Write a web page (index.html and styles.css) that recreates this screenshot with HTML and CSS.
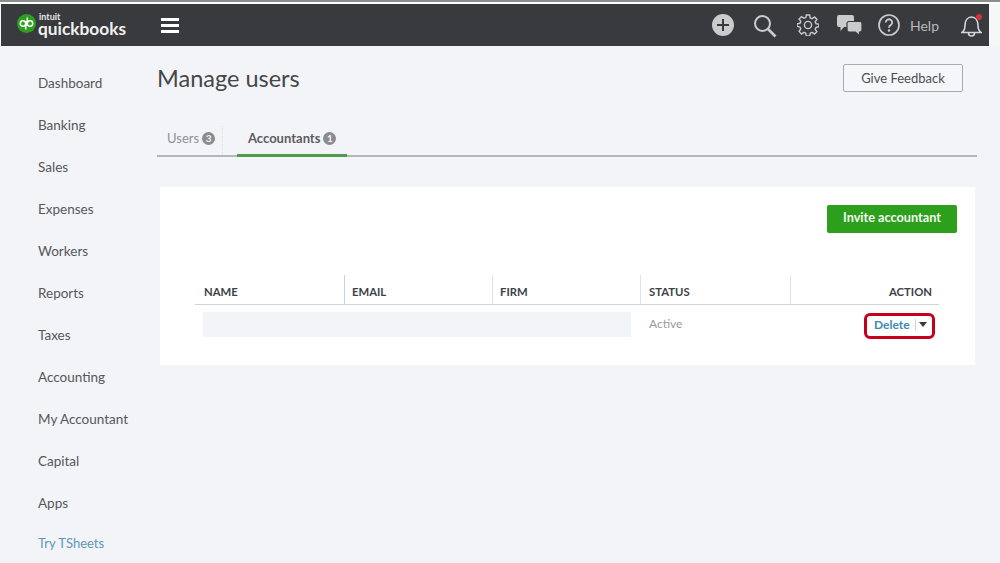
FILE: index.html
```html
<!DOCTYPE html>
<html lang="en">
<head>
<meta charset="utf-8">
<title>Manage users</title>
<link rel="stylesheet" href="styles.css">
</head>
<body>
<div class="topstrip"></div>
<header class="topbar">
  <div class="brand">
    <svg class="qb-logo" width="19" height="19" viewBox="0 0 19 19"><circle cx="9.5" cy="9.500" r="9.500" fill="#2ca01c"/><g fill="none" stroke="#fff" stroke-width="1.500"><circle cx="6" cy="9.500" r="2.700"/><circle cx="13" cy="9.500" r="2.700"/><path d="M8.700 7V15.500M10.300 12V3.500"/></g></svg>
    <div class="wordmark"><span class="intuit">intuit</span><span class="qb-name">quickbooks</span></div>
  </div>
  <div class="burger"><span></span><span></span><span></span></div>
  <div class="top-actions">
    <svg class="i-plus" width="22" height="22" viewBox="0 0 22 22"><circle cx="11" cy="11" r="11" fill="#c9cbcd"/><path d="M5 11H17M11 5V17" stroke="#393a3d" stroke-width="2"/></svg>
    <svg class="i-search" width="24" height="24" viewBox="0 0 24 24"><circle cx="9.500" cy="9.500" r="7.500" fill="none" stroke="#c9cbcd" stroke-width="2"/><path d="M15 15L22.500 22.500" stroke="#c9cbcd" stroke-width="2.600"/></svg>
    <svg class="i-gear" width="22" height="22" viewBox="0 0 22 22" fill="none" stroke="#c9cbcd" stroke-width="1.400"><circle cx="11" cy="11" r="3.600"/><path d="M9.300 1h3.400l.5 2.900 1.900.8 2.400-1.700 2.400 2.400-1.700 2.400.8 1.900 2.900.5v2.600l-2.900.6-.8 1.900 1.700 2.400-2.400 2.400-2.400-1.700-1.900.8-.5 2.800H9.300l-.5-2.800-1.900-.8-2.400 1.700L2.100 17.300l1.700-2.400-.8-1.900-2.900-.6V9.800l2.900-.5.8-1.900L2.100 5l2.400-2.400 2.400 1.700 1.900-.8z"/></svg>
    <svg class="i-chat" width="25" height="21" viewBox="0 0 25 21"><path d="M2 0H15a2 2 0 0 1 2 2V10a2 2 0 0 1-2 2H7L3.500 16V12H2a2 2 0 0 1-2-2V2a2 2 0 0 1 2-2Z" fill="#c9cbcd"/><path d="M12 6.500H23a2 2 0 0 1 2 2V15a2 2 0 0 1-2 2H22.500V21L18.500 17H12a2 2 0 0 1-2-2V8.500a2 2 0 0 1 2-2Z" fill="#c9cbcd" stroke="#393a3d" stroke-width="1.200"/></svg>
    <svg class="i-help" width="22" height="22" viewBox="0 0 22 22"><circle cx="11" cy="11" r="10" fill="none" stroke="#c9cbcd" stroke-width="1.700"/><path d="M7.800 8.500a3.200 3.200 0 1 1 5 2.600c-1.200.8-1.800 1.300-1.800 2.700" fill="none" stroke="#c9cbcd" stroke-width="1.800"/><circle cx="11" cy="16.500" r="1.200" fill="#c9cbcd"/></svg>
    <span class="help-label">Help</span>
    <span class="bell-wrap">
      <svg width="21" height="23" viewBox="0 0 21 23" fill="none" stroke="#d5d6d8" stroke-width="1.600"><path d="M1 18.500C3 17 4 15.500 4 11.500C4 6.500 6.500 3 10.500 3S17 6.500 17 11.500C17 15.500 18 17 20 18.500Z"/><path d="M7.500 19a3 3 0 0 0 6 0"/></svg>
      <span class="bell-dot"></span>
    </span>
  </div>
</header>
<div class="shell">
  <nav class="sidebar">
    <a>Dashboard</a><a>Banking</a><a>Sales</a><a>Expenses</a><a>Workers</a><a>Reports</a><a>Taxes</a><a>Accounting</a><a>My Accountant</a><a>Capital</a><a>Apps</a><a class="promo">Try TSheets</a>
  </nav>
  <main class="content">
    <div class="page-head">
      <h1>Manage users</h1>
      <button class="feedback">Give Feedback</button>
    </div>
    <div class="tabs">
      <div class="tab tab-users">Users<span class="count">3</span></div>
      <div class="tab tab-active">Accountants<span class="count">1</span></div>
    </div>
    <section class="card">
      <div class="card-actions"><button class="invite">Invite accountant</button></div>
      <div class="table">
        <div class="row head">
          <div class="cell c-name">NAME</div>
          <div class="cell c-email">EMAIL</div>
          <div class="cell c-firm">FIRM</div>
          <div class="cell c-status">STATUS</div>
          <div class="cell c-action">ACTION</div>
        </div>
        <div class="row body">
          <div class="redacted"></div>
          <div class="status">Active</div>
          <div class="action-box"><span class="delete">Delete</span><span class="sep"></span><span class="caret"></span></div>
        </div>
      </div>
    </section>
  </main>
</div>
</body>
</html>
```

FILE: styles.css
```css
* { box-sizing: border-box; }
html, body { margin: 0; height: 563px; overflow: hidden; }
body {
  position: relative;
  background: #f3f4f8;
  font-family: Lato, "Noto Sans", sans-serif;
  color: #55575b;
}
body::after {
  content: "";
  position: absolute;
  top: 0;
  right: 0;
  width: 3px;
  height: 100%;
  background: linear-gradient(to bottom, transparent 0 24px, #e4e5e8 24px 25px, transparent 25px);
  background-size: 100% 23.500px;
}
.topstrip {
  height: 4px;
  background: #fff;
  border-top: 2px solid #8d8d8d;
}
.topbar {
  height: 42px;
  background: #393a3d;
  border-left: 1px solid #f6f7f9;
  border-right: 11px solid #f6f7f9;
  display: flex;
  align-items: center;
  color: #c9cbcd;
}
.brand {
  display: flex;
  align-items: center;
  gap: 2px;
  margin-left: 16px;
  width: 128px;
  margin-top: -3px;
}
.wordmark { display: flex; flex-direction: column; color: #fff; margin-top: 3px; }
.intuit { font-size: 9px; font-weight: 700; height: 7px; line-height: 7px; margin-left: 1px; color: #e8e8e8; }
.qb-name { font-size: 17.300px; font-weight: 700; height: 17px; line-height: 17px; color: #f1f1f1; }
.burger { display: flex; flex-direction: column; gap: 3px; width: 18px; margin-left: 16px; }
.burger span { height: 3px; background: #fff; }
.top-actions { margin-left: auto; display: flex; align-items: center; padding-right: 7px; }
.i-search { margin-left: 19px; margin-top: 1px; }
.i-gear { margin-left: 20px; }
.i-chat { margin-left: 18px; }
.i-help { margin-left: 16px; }
.help-label { margin-left: 10px; font-size: 14px; color: #b6b8ba; width: 30px; }
.bell-wrap { position: relative; margin-left: 21px; display: flex; }
.bell-dot { position: absolute; top: 0; right: 0; width: 6px; height: 6px; border-radius: 50%; background: #d5303e; }
.shell { display: flex; }
.sidebar { width: 157px; padding: 16px 0 0 38px; display: flex; flex-direction: column; flex: none; }
.sidebar a { height: 42px; font-size: 13.500px; line-height: 42px; color: #55575b; white-space: nowrap; }
.sidebar .promo { color: #5c97b5; font-size: 13px; line-height: 38px; }
.content { width: 820px; flex: none; }
.page-head { display: flex; justify-content: space-between; align-items: flex-start; height: 68px; padding-top: 15px; }
h1 { margin: 0; font-size: 23.500px; font-weight: 400; line-height: 34px; color: #45474a; }
.feedback {
  width: 120px; height: 28px; margin: 3px 14px 0 0;
  background: #f5f6f9; border: 1px solid #a9abae; border-radius: 2px;
  font: 400 13px Lato, "Noto Sans", sans-serif; color: #4c4e52;
}
.tabs { height: 43px; display: flex; align-items: flex-end; border-bottom: 2px solid #b4b7b8; margin-bottom: 30px; }
.tab { height: 30px; font-size: 13px; line-height: 24px; display: flex; align-items: flex-start; }
.tab-users { width: 66px; padding-left: 10px; color: #8f9194; border-right: 1px dotted #dcdde0; height: 29px; }
.tab-active { margin-left: 14px; width: 110px; padding-left: 11px; font-weight: 700; color: #5a5c60; border-bottom: 3px solid #4f9c4a; margin-bottom: -2px; height: 31px; }
.count {
  width: 13px; height: 13px; margin: 6px 0 0 3px; border-radius: 50%;
  background: #8a8c8f; color: #f3f4f8; font-size: 10px; font-weight: 700; line-height: 13px; text-align: center;
}
.card { margin-left: 3px; width: 815px; height: 178px; background: #fff; padding: 18px 18px 0 35px; }
.card-actions { display: flex; justify-content: flex-end; }
.invite {
  width: 130px; height: 28px; border: 0; border-radius: 2px; background: #2ca01c; color: #f4f8f2;
  font: 700 12.700px Lato, "Noto Sans", sans-serif; padding: 0 0 4px;
}
.table { width: 744px; margin-top: 42px; }
.row { display: flex; }
.head { height: 30px; border-bottom: 1px solid #cfd4d8; }
.cell { font-size: 11.300px; font-weight: 700; color: #404246; padding: 10px 0 0 9px; border-right: 1px solid #dfe3e6; line-height: 14px; }
.c-name { width: 150px; border-right-color: #c8d3dc; }
.c-email { width: 148px; padding-left: 7px; }
.c-firm { width: 148px; padding-left: 7px; }
.c-status { width: 150px; padding-left: 8px; }
.c-action { flex: 1; text-align: right; border-right: 0; padding: 10px 7px 0 0; }
.body { position: relative; height: 46px; padding: 7px 0 0 8px; align-items: flex-start; }
.redacted { width: 428px; height: 25px; background: #f3f4f7; flex: none; }
.status { margin-left: 18px; font-size: 12px; line-height: 24px; color: #9a9c9f; }
.action-box {
  position: absolute; right: 4px; top: 8px;
  width: 71px; height: 26px;
  border: 3px solid #c4001a; border-radius: 6px;
  display: flex; align-items: center; padding: 0 0 3px 7px;
}
.delete { font-size: 12px; font-weight: 700; color: #3a8ab4; }
.sep { width: 1px; height: 12px; background: #cfd2d4; margin-left: 5px; }
.caret { width: 0; height: 0; border: 4px solid transparent; border-top: 5px solid #393a3d; border-bottom: 0; margin-left: 3px; }
```
